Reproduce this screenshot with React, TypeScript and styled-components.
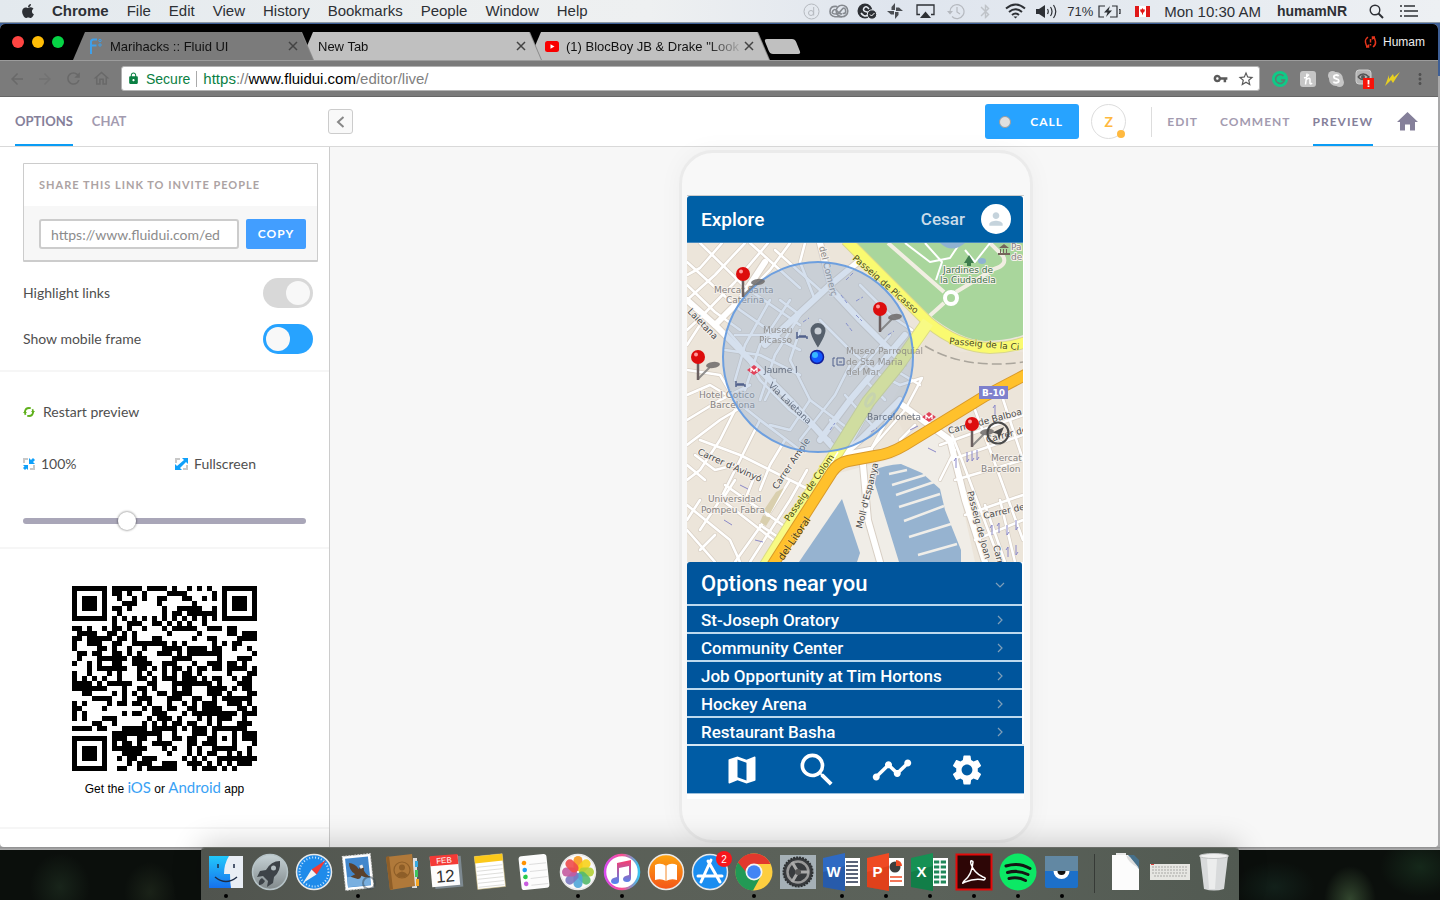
import React from 'react';
import styled, { createGlobalStyle, css } from 'styled-components';
import {
  MdArrowBack, MdArrowForward, MdRefresh, MdOutlineHome, MdLock, MdVpnKey, MdStarBorder,
  MdMoreVert, MdMap, MdSearch, MdTimeline, MdSettings, MdPerson, MdBluetooth,
} from 'react-icons/md';
import { FaApple } from 'react-icons/fa';

const system = '"Liberation Sans", Arial, sans-serif';
const lato = 'Lato, sans-serif';
const roboto = 'Roboto, sans-serif';

const Global = createGlobalStyle`
  * { box-sizing: border-box; }
  body { margin: 0; font-family: ${system}; background: #0c1411; }
  button, input { font: inherit; margin: 0; }
  button { border: 0; padding: 0; background: none; color: inherit; cursor: pointer; }
  a { color: inherit; text-decoration: none; }
  svg { display: block; flex: none; }
`;

/* ---------- desktop ---------- */

const Desktop = styled.div`
  min-height: 100vh;
  display: flex;
  flex-direction: column;
  background: linear-gradient(#3e5f96 0 76px, #a9a9aa 76px 100%);
`;

const MenuBar = styled.header`
  height: 23px;
  flex: none;
  display: flex;
  align-items: center;
  padding: 0 22px 0 20px;
  color: #2d3035;
  font-size: 15px;
  background: linear-gradient(90deg, #e3e9ee, #eceff0 30%, #eef0f1 45%, #dfe5ee 62%, #e5eaf0 80%, #edf0f3);
  border-bottom: 1px solid #8d98a3;
`;

const Menus = styled.nav`
  display: flex;
  gap: 18px;
  margin-left: 16px;
`;

const MenuItem = styled.button<{ $bold?: boolean }>`
  font-weight: ${(p) => (p.$bold ? 700 : 400)};
  line-height: 22px;
`;

const Status = styled.div`
  display: flex;
  align-items: center;
  margin-left: auto;
`;

const StatusIcon = styled.span<{ $w: number; $color?: string; $end?: boolean }>`
  width: ${(p) => p.$w}px;
  display: flex;
  justify-content: ${(p) => (p.$end ? 'flex-end' : 'center')};
  color: ${(p) => p.$color || '#2d3035'};
`;

const StatusText = styled.span<{ $size: number; $bold?: boolean; $pad: string }>`
  font-size: ${(p) => p.$size}px;
  font-weight: ${(p) => (p.$bold ? 700 : 400)};
  padding: ${(p) => p.$pad};
  white-space: nowrap;
`;

/* ---------- browser ---------- */

const Browser = styled.div`
  flex: 1;
  display: flex;
  flex-direction: column;
  margin: 1px 2px 0 0;
  border-radius: 5px 5px 4px 4px;
  overflow: hidden;
  background: #fff;
`;

const TabStrip = styled.div`
  height: 36px;
  display: flex;
  align-items: flex-end;
  padding: 0 13px 0 12px;
  background: #000;
`;

const Lights = styled.div`
  display: flex;
  gap: 8px;
  align-self: center;
  width: 61px;
`;

const Light = styled.button<{ $c: string }>`
  width: 12px;
  height: 12px;
  border-radius: 50%;
  background: ${(p) => p.$c};
`;

const TabWrap = styled.div<{ $z: number }>`
  position: relative;
  z-index: ${(p) => p.$z};
  filter: drop-shadow(1px 0 0 #8a8a8a);
  & + & { margin-left: -12px; }
`;

const TabShape = styled.div<{ $active?: boolean }>`
  width: 240px;
  height: 28px;
  display: flex;
  align-items: center;
  padding: 0 15px 0 16px;
  font-size: 13px;
  color: #111;
  background: ${(p) => (p.$active ? '#7b7b7b' : '#c0c0c0')};
  clip-path: polygon(0 100%, 12px 0, calc(100% - 12px) 0, 100% 100%);
`;

const TabTitle = styled.span<{ $fade?: boolean; $bare?: boolean }>`
  flex: 1;
  overflow: hidden;
  white-space: nowrap;
  padding-left: ${(p) => (p.$bare ? 1 : 7)}px;
  ${(p) => p.$fade && css`
    -webkit-mask-image: linear-gradient(90deg, #000 80%, transparent);
    mask-image: linear-gradient(90deg, #000 80%, transparent);
  `}
`;

const NewTab = styled.button`
  width: 31px;
  height: 15px;
  margin: 0 0 6px -2px;
  background: #c0c0c0;
  border-radius: 3px;
  transform: skewX(22deg);
`;

const Profile = styled.button`
  margin-left: auto;
  align-self: center;
  display: flex;
  align-items: center;
  gap: 6px;
  font-size: 12px;
  color: #eee;
`;

const Toolbar = styled.div`
  height: 37px;
  display: flex;
  align-items: center;
  padding: 0 4px 0 8px;
  background: #7b7b7b;
  border-top: 1px solid #9c9c9c;
  border-bottom: 1px solid #666;
`;

const NavButton = styled.button<{ $dim?: boolean }>`
  width: 28px;
  color: ${(p) => (p.$dim ? '#727272' : '#696969')};
`;

const Omnibox = styled.div`
  flex: 1;
  height: 25px;
  margin: 0 6px 0 1px;
  display: flex;
  align-items: center;
  padding: 0 0 0 5px;
  background: #fff;
  border: 1px solid #b2b2b2;
  border-radius: 3px;
  color: #0b8043;
  font-size: 15px;
`;

const Secure = styled.span`
  font-size: 14px;
  padding: 0 6px;
  margin-right: 6px;
  border-right: 1px solid #aaa;
`;

const Address = styled.div`
  flex: 1;
  color: #808080;
  outline: 0;
  em { font-style: normal; color: #0b8043; }
  strong { font-weight: 400; color: #000; }
`;

const BoxIcon = styled.button`
  width: 26px;
  display: flex;
  justify-content: center;
  color: #5a5a5a;
`;

const Extension = styled.button`
  width: 28px;
  display: flex;
  justify-content: center;
  color: #505050;
`;

/* ---------- Fluid UI shell ---------- */

const AppHeader = styled.div`
  height: 50px;
  display: flex;
  align-items: center;
  padding: 0 20px 0 15px;
  border-bottom: 1px solid #d9d9d9;
  font-family: ${lato};
`;

const HeaderTab = styled.a<{ $active?: boolean }>`
  height: 49px;
  line-height: 49px;
  font-weight: 700;
  color: ${(p) => (p.$active ? '#85809a' : '#a39bb0')};
  border-bottom: 2px solid ${(p) => (p.$active ? '#0a9cf5' : 'transparent')};
`;

const PanelTabs = styled.nav`
  display: flex;
  align-self: stretch;
  width: 313px;
  gap: 19px;
  font-size: 13px;
`;

const ModeTabs = styled.nav`
  display: flex;
  align-self: stretch;
  gap: 22px;
  font-size: 12px;
  letter-spacing: 1px;
`;

const Collapse = styled.button`
  width: 25px;
  height: 25px;
  display: grid;
  place-items: center;
  border: 1px solid #ccc;
  border-radius: 3px;
  background: #f9f9f9;
`;

const Actions = styled.div`
  display: flex;
  align-items: center;
  margin-left: auto;
`;

const Call = styled.button`
  width: 94px;
  height: 35px;
  display: flex;
  align-items: center;
  gap: 19px;
  padding-left: 14px;
  border-radius: 3px;
  background: #27a3ff;
  color: #fff;
  font-size: 12px;
  font-weight: 700;
  letter-spacing: 1px;
`;

const Record = styled.span`
  width: 12px;
  height: 12px;
  border-radius: 50%;
  background: #e0e0e0;
  border: 1px solid #9c9c9c;
`;

const Avatar = styled.div`
  position: relative;
  width: 35px;
  height: 35px;
  margin: 0 25px 0 12px;
  border: 1px solid #ddd;
  border-radius: 50%;
  text-align: center;
  line-height: 34px;
  font-size: 14px;
  font-weight: 700;
  color: #ffb93f;
  &::after {
    content: '';
    position: absolute;
    right: 0;
    bottom: 0;
    width: 8px;
    height: 8px;
    border-radius: 50%;
    background: #ffb93f;
  }
`;

const Rule = styled.span`
  width: 1px;
  height: 30px;
  margin-right: 15px;
  background: #ddd;
`;

const HomeLink = styled.a`
  margin-left: 24px;
`;

const Workspace = styled.div`
  flex: 1;
  display: flex;
`;

const Sidebar = styled.aside`
  width: 330px;
  flex: none;
  border-right: 1px solid #ccc;
  font-family: ${lato};
  font-size: 14px;
  line-height: 20px;
  color: #4f4f4f;
`;

const Section = styled.section<{ $pad: string }>`
  padding: ${(p) => p.$pad};
  border-bottom: 2px solid #f6f6f6;
`;

const ShareCard = styled.div`
  margin-right: -12px;
  border: 1px solid #ccc;
  border-bottom-width: 2px;
  border-radius: 1px;
`;

const ShareTitle = styled.label`
  display: block;
  height: 42px;
  line-height: 42px;
  padding-left: 15px;
  font-size: 11px;
  font-weight: 700;
  letter-spacing: 1px;
  color: #aca3a3;
`;

const ShareRow = styled.div`
  display: flex;
  gap: 7px;
  padding: 13px 11px 11px 15px;
  background: #f7f7f7;
`;

const LinkInput = styled.input`
  flex: 1;
  min-width: 0;
  height: 30px;
  padding: 1px 2px 0 10px;
  border: 2px solid #ccc;
  border-radius: 3px;
  background: #fff;
  color: #8c8c8c;
  font-size: 14px;
  outline: 0;
`;

const Copy = styled.button`
  width: 60px;
  height: 30px;
  border-radius: 2px;
  background: #429eff;
  color: #fff;
  font-size: 12px;
  font-weight: 700;
  letter-spacing: 1px;
`;

const ToggleRow = styled.label`
  height: 30px;
  margin: 16px -7px 0 0;
  display: flex;
  align-items: center;
  justify-content: space-between;
`;

const Toggle = styled.input`
  appearance: none;
  width: 50px;
  height: 30px;
  padding: 3px;
  border-radius: 15px;
  background: #d8d8d8;
  display: flex;
  justify-content: flex-end;
  &::before {
    content: '';
    width: 24px;
    height: 24px;
    border-radius: 50%;
    background: #f8f8f8;
  }
  &:checked { background: #27a3ff; justify-content: flex-start; }
`;

const Tool = styled.button<{ $gap: number }>`
  display: flex;
  align-items: center;
  gap: ${(p) => p.$gap}px;
`;

const ZoomRow = styled.div`
  display: grid;
  grid-template-columns: 152px 1fr;
  margin: 32px 0 37px;
`;

const Slider = styled.input`
  appearance: none;
  display: block;
  width: 100%;
  height: 20px;
  background: none;
  &::-webkit-slider-runnable-track {
    height: 6px;
    border-radius: 3px;
    background: #a9a6b8;
  }
  &::-webkit-slider-thumb {
    appearance: none;
    width: 18px;
    height: 18px;
    margin-top: -6px;
    border-radius: 50%;
    background: #fff;
    box-shadow: 0 0 2px 1px rgba(0, 0, 0, 0.3);
  }
`;

const QrBlock = styled.div`
  display: flex;
  flex-direction: column;
  align-items: center;
  gap: 6px;
`;

const Caption = styled.p`
  margin: 0;
  font-family: ${system};
  font-size: 12px;
  line-height: 20px;
  color: #000;
  a { font-family: ${lato}; font-size: 15px; color: #3aa2f5; }
`;

const Stage = styled.main`
  flex: 1;
  display: flex;
  justify-content: center;
  align-items: flex-start;
  padding: 3px 56px 4px 0;
  background: #f7f7f7;
`;

/* ---------- phone ---------- */

const Phone = styled.div`
  width: 354px;
  padding: 42px 6px 41px 5px;
  border: 3px solid #ebebeb;
  border-radius: 34px;
  background: #f8f8f8;
  box-shadow: 0 0 24px rgba(0, 0, 0, 0.04);
`;

const Screen = styled.div`
  width: 337px;
  padding-bottom: 5px;
  background: #fff;
  border-top: 1px solid #ccc;
  font-family: ${roboto};
  font-weight: 500;
  color: #fff;
`;

const TitleBar = styled.div`
  height: 47px;
  margin-right: 1px;
  display: flex;
  align-items: center;
  padding: 0 12px 0 14px;
  border-radius: 3px 3px 0 0;
  border-bottom: 1px solid #4789bd;
  background: #0060a6;
`;

const Title = styled.h1`
  flex: 1;
  margin: 0;
  font-size: 19px;
  font-weight: 500;
`;

const UserName = styled.span`
  font-size: 17px;
  color: #c9dbe9;
  margin-right: 16px;
`;

const UserIcon = styled.span`
  width: 30px;
  height: 30px;
  display: grid;
  place-items: center;
  border-radius: 50%;
  background: #fff;
  color: #c5d3dc;
`;

const ListHead = styled.button`
  width: 335px;
  height: 42px;
  display: flex;
  align-items: center;
  justify-content: space-between;
  padding: 0 17px 0 14px;
  border-radius: 3px 3px 0 0;
  background: #00559c;
  font-size: 22px;
  font-weight: 500;
`;

const List = styled.ul`
  list-style: none;
  margin: 0;
  padding: 0;
`;

const Option = styled.button`
  width: 335px;
  height: 28px;
  display: flex;
  align-items: center;
  justify-content: space-between;
  padding: 2px 17px 0 14px;
  border-top: 2px solid #bdd9ee;
  background: #00559c;
  font-size: 17px;
  font-weight: 500;
`;

const BottomNav = styled.nav`
  height: 50px;
  display: grid;
  grid-template-columns: repeat(4, 75px);
  place-items: center;
  padding: 0 17px;
  border-top: 2px solid #d6e7f4;
  border-bottom: 1px solid #9dc0dc;
  background: #005ca5;
`;

/* ---------- dock ---------- */

const DockArea = styled.footer`
  height: 53px;
  flex: none;
  display: flex;
  justify-content: center;
  align-items: flex-end;
  background:
    linear-gradient(#8e8e8f, #b0b0b0) 0 0 / 100% 3px no-repeat,
    radial-gradient(ellipse 26px 34px at 1350px 100%, #33472f, transparent),
    radial-gradient(ellipse 40px 30px at 1420px 20px, #15281a, transparent),
    radial-gradient(ellipse 40px 26px at 1275px 40px, #12201a, transparent),
    radial-gradient(ellipse 30px 34px at 60px 40px, #18241a, transparent),
    radial-gradient(ellipse 26px 30px at 150px 45px, #1a2218, transparent),
    #0b0f0c;
`;

const Dock = styled.nav`
  position: relative;
  height: 52px;
  display: flex;
  padding: 0 3px;
  border-radius: 4px 4px 0 0;
  background: linear-gradient(90deg, #50544e, #5a5f57 30%, #5b625a 70%, #525a52);
  box-shadow: 0 -1px 0 #6a6d68, 0 -4px 30px rgba(0, 0, 0, 0.2);
`;

const DockItem = styled.button<{ $running?: boolean }>`
  width: 44px;
  display: flex;
  flex-direction: column;
  align-items: center;
  gap: 2px;
  padding-top: 4px;
  &::after {
    content: '';
    width: 4px;
    height: 4px;
    border-radius: 50%;
    background: ${(p) => (p.$running ? '#000' : 'transparent')};
  }
`;

const DockRule = styled.span`
  width: 1px;
  margin: 6px 9px 7px 10px;
  background: #363a36;
`;

/* ---------- QR code ---------- */

const QR_SIZE = 37;

function finder(x: number, y: number): boolean | null {
  const corners = [[0, 0], [QR_SIZE - 7, 0], [0, QR_SIZE - 7]];
  for (const [cx, cy] of corners) {
    const dx = x - cx;
    const dy = y - cy;
    if (dx >= -1 && dx <= 7 && dy >= -1 && dy <= 7) {
      const ring = Math.max(Math.abs(dx - 3), Math.abs(dy - 3));
      return ring !== 4 && ring !== 2;
    }
  }
  const ring = Math.max(Math.abs(x - 30), Math.abs(y - 30));
  if (ring <= 2) return ring !== 1;
  if (x === 6) return y % 2 === 0;
  if (y === 6) return x % 2 === 0;
  return null;
}

function qrPath() {
  let seed = 20177;
  let d = '';
  for (let y = 0; y < QR_SIZE; y++) {
    for (let x = 0; x < QR_SIZE; x++) {
      seed = (seed * 48271) % 2147483647;
      const fixed = finder(x, y);
      if (fixed === null ? seed / 2147483647 > 0.5 : fixed) d += `M${x} ${y}h1v1h-1z`;
    }
  }
  return d;
}

const QrCode = () => (
  <svg width="185" height="185" viewBox="0 0 37 37" shapeRendering="crispEdges" role="img" aria-label="QR code">
    <path d={qrPath()} fill="#000" />
  </svg>
);

/* ---------- map ---------- */

const MapSvg = styled.svg`
  width: 336px;
  height: 319px;
  text {
    font-family: "DejaVu Sans", sans-serif;
    font-size: 9px;
    fill: #85827f;
    stroke: #f5f0ea;
    stroke-width: 2px;
    paint-order: stroke;
  }
  text.street { fill: #4b4b4b; }
  text.main { fill: #4a4a12; stroke: #fafa8c; stroke-width: 1px; }
  text.orange { fill: #4a3a12; font-size: 10px; stroke: #ffd25e; stroke-width: 1px; }
  text.park { fill: #3c7048; }
  text.sign { fill: #fff; stroke: none; font-weight: 700; }
  .shaded { opacity: 0.8; }
  .shaded text { stroke: none; }
  .shaded text.dark { fill: #4b5568; }
`;

const minorStreets = [
  'M687 262L740 310L790 345', 'M700 243L745 287L800 325', 'M722 243L700 268L687 275', 'M745 243L715 275L687 300',
  'M768 243L735 282L700 318L687 330', 'M790 243L770 270L740 300', 'M687 285L715 312L740 330', 'M750 243L800 288',
  'M775 250L820 290', 'M805 243L800 262L815 300', 'M700 325L687 345', 'M727 330L740 345L760 380L790 410L830 440',
  'M770 300L745 345L735 380', 'M790 300L760 345L745 390', 'M800 315L775 355L760 400', 'M725 350L760 355L800 375',
  'M735 335L770 335L800 350', 'M800 330L790 360L810 400L850 430', 'M820 320L850 350L880 375L900 385',
  'M840 300L870 330L905 365', 'M860 285L890 315L912 330', 'M850 365L835 395L800 440', 'M870 350L850 375',
  'M890 335L860 370', 'M865 380L885 400', 'M845 395L872 425', 'M830 420L850 440', 'M687 395L710 385L735 400L760 420L800 450',
  'M687 420L720 400L750 385', 'M687 445L720 420L745 405', 'M687 370L720 375L735 400', 'M700 440L740 455L790 480L810 490',
  'M735 410L720 440L700 470L687 480', 'M760 420L745 450L720 500L700 530', 'M785 440L770 465L760 490',
  'M725 485L790 530', 'M735 480L722 500L780 545', 'M755 475L745 500', 'M687 505L730 540L740 562', 'M687 530L715 562',
  'M700 500L687 520', 'M790 480L765 520L735 562', 'M807 470L790 500L750 562', 'M700 550L715 535', 'M760 525L790 545',
  'M695 455L715 470L735 465', 'M687 465L705 480', 'M810 400L790 430L770 425', 'M775 380L765 400', 'M780 300L800 315',
  'M900 385L922 378L905 410L870 450', 'M895 370L920 385', 'M875 400L850 445', 'M890 415L868 455', 'M900 405L950 440',
  'M915 425L900 440', 'M950 430L960 455L1000 562', 'M975 410L990 450L1023 540', 'M940 445L1023 415',
  'M950 460L1023 435', 'M955 480L1023 460', 'M965 515L1023 495', 'M975 540L1023 520', 'M1000 390L1023 460',
  'M1000 500L1015 562', 'M985 505L1005 562', 'M955 450L940 480',
];

const avenues = ['M687 300L715 325L740 300L765 262', 'M715 325L790 400L840 455', 'M765 345L830 285L858 262',
  'M820 243L832 290L860 320L900 360', 'M820 440L850 400L905 335', 'M843 455L860 440L900 400', 'M902 405L950 440L965 500L985 562',
  'M820 475L845 455L870 450', 'M863 465L868 520L880 562'];

const Pin = ({ x, y }: { x: number; y: number }) => (
  <g transform={`translate(${x} ${y})`}>
    <ellipse cx="15" cy="8" rx="7" ry="3" fill="#6d6a68" opacity=".85" transform="rotate(-8 15 8)" />
    <path d="M0 22L12 10" stroke="#777" strokeWidth="2" opacity=".8" />
    <path d="M0 5V23" stroke="#6b6060" strokeWidth="2.5" />
    <circle r="7" fill="#dd0d0d" />
    <circle cx="-2" cy="-2.5" r="2" fill="#ff9a9a" />
  </g>
);

const CityMap = () => (
  <MapSvg viewBox="687 243 336 319" role="img" aria-label="Map of Barcelona">
    <rect x="687" y="243" width="336" height="319" fill="#ece5da" />
    <path d="M780 562L832 475L895 458L945 425L975 562Z" fill="#f0ede7" />
    <path d="M930 330L960 352L1023 352V372L905 435L890 405Z" fill="#eae2d6" />
    <g fill="none" strokeLinecap="round" strokeLinejoin="round">
      {minorStreets.map((d) => <path key={d} d={d} stroke="#d8cfc4" strokeWidth="4" />)}
      {avenues.map((d) => <path key={d} d={d} stroke="#d8cfc4" strokeWidth="8" />)}
      {minorStreets.map((d) => <path key={d} d={d} stroke="#fff" strokeWidth="2.6" />)}
      {avenues.map((d) => <path key={d} d={d} stroke="#fff" strokeWidth="6" />)}
    </g>
    <path d="M855 243L928 314Q960 340 985 341Q1006 341 1023 335V243Z" fill="#a9d69c" />
    <g fill="none" stroke="#fff" strokeWidth="4" strokeLinejoin="round">
      <path d="M888 243L944 292M956 292L994 269Q1008 265 1003 256L990 243M944 303L925 320" stroke="#f1eee2" />
      <path d="M905 243L930 262L950 258L960 243M925 243L942 262L936 280M965 250L975 262L990 243" strokeWidth="2" />
      <circle cx="951" cy="298" r="6" />
    </g>
    <path d="M940 243Q952 254 965 243Z" fill="#8fb3d1" />
    <ellipse cx="982" cy="261" rx="4" ry="3" fill="#8fb3d1" />
    <path d="M969 255l5 8h-3v3h-4v-3h-3z" fill="#3f7d4e" />
    <path d="M999 248l5-4 5 4zM1000 249h1v4h-1zm3 0h1v4h-1zm3 0h1v4h-1zM998 253h12v2h-12z" fill="#75655b" />
    <g fill="none" strokeLinejoin="round">
      <path d="M846 240L928 322Q958 347 990 348Q1008 348 1026 342" stroke="#d8d68c" strokeWidth="12" />
      <path d="M928 322L898 365L868 402L835 455L765 567" stroke="#dcdc84" strokeWidth="14" />
      <path d="M846 240L928 322Q958 347 990 348Q1008 348 1026 342" stroke="#fafa70" strokeWidth="10" />
      <path d="M928 322L898 365L868 402L835 455L765 567" stroke="#f8fa84" strokeWidth="12" />
      <path d="M838 452L770 562" stroke="#fff" strokeWidth="1.5" />
      <ellipse cx="870" cy="400" rx="3" ry="7" stroke="#e7ea9a" strokeWidth="3" transform="rotate(32 870 400)" />
      <path d="M925 346Q965 370 1023 362" stroke="#aaa59c" strokeWidth="1.5" strokeDasharray="10 4" />
      <path d="M1027 374L985 396L905 445Q890 454 875 456L848 461Q838 463 832 472L770 569" stroke="#d8992a" strokeWidth="12" />
      <path d="M1027 374L985 396L905 445Q890 454 875 456L848 461Q838 463 832 472L770 569" stroke="#ffc12c" strokeWidth="10" />
    </g>
    <path d="M842 499L860 553L857 562H799Z" fill="#96b3d0" />
    <path d="M871 471Q885 465 901 464L922 473L940 489L945 510L961 550L961 562H899Z" fill="#96b3d0" />
    <path d="M889 474L907 470M892 485L925 475M896 495L934 482M899 507L940 494M904 521L944 506M909 537L951 524M918 555L957 544" stroke="#f0eee9" strokeWidth="2.5" />
    <path d="M776 492l8-4-14 26-6-4zM763 515l8 3-5 8-6-4z" fill="#d9cfae" />
    <text x="714" y="293">Mercat Santa</text><text x="726" y="303">Caterina</text>
    <text x="687" y="312" className="street" transform="rotate(46 687 312)">Laietana</text>
    <text x="819" y="247" transform="rotate(76 819 247)">del Comerç</text>
    <text x="699" y="398">Hotel Gotico</text><text x="710" y="408">Barcelona</text>
    <text x="708" y="502">Universidad</text><text x="701" y="513">Pompeu Fabra</text>
    <text x="697" y="454" className="street" transform="rotate(24 697 454)">Carrer d'Avinyó</text>
    <text x="777" y="490" className="street" transform="rotate(-56 777 490)">Carrer Ample</text>
    <text x="789" y="522" className="main" transform="rotate(-55 789 522)">Passeig de Colom</text>
    <text x="783" y="561" className="orange" transform="rotate(-56 783 561)">del Litoral</text>
    <text x="862" y="529" className="street" transform="rotate(-76 862 529)">Moll d'Espanya</text>
    <text x="852" y="259" className="main" transform="rotate(41 852 259)">Passeig de Picasso</text>
    <text x="949" y="344" className="main" transform="rotate(5 949 344)">Passeig de la Ci</text>
    <text x="943" y="273" className="park">Jardines de</text><text x="940" y="283" className="park">la Ciudadela</text>
    <text x="1011" y="250">Pa</text><text x="1011" y="260">de</text>
    <text x="949" y="434" className="street" transform="rotate(-15 949 434)">Carrer de Balboa</text>
    <text x="987" y="443" className="street" transform="rotate(-15 987 443)">Carrer de</text>
    <text x="991" y="461">Mercat</text><text x="981" y="472">Barcelon</text>
    <text x="984" y="519" className="street" transform="rotate(-13 984 519)">Carrer de</text>
    <text x="967" y="492" className="street" transform="rotate(75 967 492)">Passeig de Joan</text>
    <text x="993" y="546" className="street" transform="rotate(76 993 546)">Carr</text>
    <g stroke="#8a88c8" fill="none" strokeWidth="1">
      <path d="M956 468v-10l-2 3M967 452v10l2-3M972 451v10l2-3M977 450v10l2-3M992 535v-10l-2 3M999 533v-10l-2 3M1007 525v10l2-3M1016 520v10l2-3M1008 557v-10l-2 3M1016 545v10l2-3M995 415v-10l-2 3M724 520l8 5M755 540l8 2M740 485l8 4M928 448l8 4M910 430l8-4" />
    </g>
    <rect x="979" y="386" width="29" height="13" fill="#7e80cc" />
    <text x="982" y="396" className="sign">B-10</text>
    <circle cx="818" cy="357" r="95" fill="#8cacd2" fillOpacity=".37" stroke="#6d9fdf" strokeWidth="2" />
    <g className="shaded">
      <text x="763" y="333">Museu</text><text x="759" y="343">Picasso</text>
      <text x="764" y="373" className="dark">Jaume I</text>
      <text x="846" y="354">Museo Parroquial</text><text x="846" y="365">de Sta Maria</text><text x="846" y="375">del Mar</text>
      <text x="768" y="386" className="dark" transform="rotate(44 768 386)">Via Laietana</text>
      <text x="867" y="420" className="dark">Barceloneta</text>
    </g>
    {[[754, 370], [929, 417]].map(([x, y]) => (
      <g key={x} transform={`translate(${x} ${y})`}>
        <path d="M0-5L7 0L0 5L-7 0Z" fill="#e0435a" />
        <path d="M-3 2V-2L0 1L3-2V2" stroke="#fff" fill="none" strokeWidth="1.3" />
      </g>
    ))}
    <path d="M797 332v7m0-2h10v2m-8-3h7M736 381v6m0-2h9v2m-8-3h7" stroke="#51618c" fill="none" strokeWidth="1.5" />
    <path d="M835 358h-2v8h2M837 358h7v7h-7zM839 362h3" stroke="#51618c" fill="none" />
    <g stroke="#8691cc" strokeDasharray="4 2">
      <path d="M846 280l8-8M841 295l6 8M856 301l7-4M856 315l6 6M803 322l6-4M846 323l6 8M888 335l6-4M830 430l5-7M871 432l6-4" />
    </g>
    <path d="M818 323a7.5 7.5 0 0 0-7.5 7.5c0 5.5 7.5 17 7.5 17s7.5-11.5 7.5-17a7.5 7.5 0 0 0-7.5-7.5zm0 4.5a3.5 3.5 0 1 1 0 7 3.5 3.5 0 0 1 0-7z" fill="#56606c" />
    <circle cx="817" cy="357" r="6.5" fill="#1457ff" stroke="#111d9a" strokeWidth="1.5" />
    <circle cx="815" cy="355" r="3" fill="#38b6ff" />
    <Pin x={743} y={274} /><Pin x={880} y={309} /><Pin x={698} y={357} /><Pin x={972} y={424} />
    <circle cx="998" cy="433" r="10.5" fill="none" stroke="#4a4a4a" strokeWidth="2" />
    <path d="M1004 427l-5 12-1.5-5-5-1.5z" fill="#4a4a4a" />
  </MapSvg>
);

/* ---------- dock icons ---------- */

const Disc = ({ fill, edge = '#e8e8e8' }: { fill: string; edge?: string }) => (
  <circle cx="20" cy="20" r="17.5" fill={fill} stroke={edge} strokeWidth="1.5" />
);

const Office = ({ letter, color, dark, children }: { letter: string; color: string; dark: string; children: React.ReactNode }) => (
  <>
    <path d="M22 6h16v28H22z" fill="#fff" />
    {children}
    <path d="M1 6L23 1V39L1 35Z" fill={color} />
    <path d="M1 20L23 14V39L1 35Z" fill={dark} opacity=".35" />
    <text x="11.5" y="25" textAnchor="middle" fontFamily={system} fontWeight="700" fontSize="15" fill="#fff">{letter}</text>
  </>
);

const apps: { name: string; running?: boolean; art: React.ReactNode }[] = [
  { name: 'Finder', running: true, art: <>
    <defs><linearGradient id="fd" x2="0" y2="1"><stop stopColor="#22c8fb" /><stop offset="1" stopColor="#1671ee" /></linearGradient></defs>
    <path d="M3 4h34v32H3z" fill="#e9eef5" /><path d="M3 4h20q-5 8-5 18h6q0 8 1 14H3z" fill="url(#fd)" />
    <path d="M12 12v4M28 12v4" stroke="#1d2b45" strokeWidth="1.5" /><path d="M9 25q11 9 22 0" stroke="#1d2b45" strokeWidth="1.5" fill="none" /></> },
  { name: 'Launchpad', art: <>
    <defs><linearGradient id="lp" x2="0" y2="1"><stop stopColor="#c6d2d6" /><stop offset="1" stopColor="#81898b" /></linearGradient></defs>
    <Disc fill="url(#lp)" edge="#b6c3c7" /><path d="M30 9q-9 0-14 9l-6 1-3 6 6-1 5 5-1 6 6-4 1-6q7-6 6-16z" fill="#3d4348" /><circle cx="23.5" cy="16" r="2.5" fill="#b3bdc1" /><path d="M12 26q-4 2-3 7 4 0 6-4z" fill="#3d4348" /></> },
  { name: 'Safari', art: <>
    <Disc fill="#1f8bea" /><circle cx="20" cy="20" r="14.5" fill="none" stroke="#c7e6ff" strokeWidth="2" strokeDasharray="1 2" /><path d="M32 8L22.5 22.5 17.5 17.5z" fill="#f33a35" /><path d="M9 31l8.5-13.5 5 5z" fill="#f2f2f2" /></> },
  { name: 'Mail', running: true, art: <>
    <g transform="rotate(-6 20 20)"><path d="M6 3h28v34H6z" fill="#fff" stroke="#ddd" strokeDasharray="2 1" /><path d="M8.5 5.5h23v29h-23z" fill="#4287cc" /><path d="M8.5 24h23v10h-23z" fill="#78afe0" /><path d="M12 10q6 1 9 7l3-3q3 1 2 5 2 5 6 7-5 1-9-2-1 3-4 3l-7-3 5-2q-6-5-5-12z" fill="#5a412c" /><path d="M22 14l3-1 1 3-3 1z" fill="#eee" /></g><circle cx="31" cy="31" r="6" fill="none" stroke="#3a4850" strokeWidth="2" opacity=".5" /></> },
  { name: 'Contacts', art: <>
    <path d="M31 6h4v30h-5z" fill="#ddd" /><path d="M33 9h3v6h-3z" fill="#35a8e0" /><path d="M33 18h3v7h-3z" fill="#3fc45e" /><path d="M34 27h3v7h-3z" fill="#f5a623" />
    <path d="M4 5L30 2L33 34L8 38Z" fill="#b0793a" /><path d="M4 5l3-1 4 33-3 1z" fill="#8e5e28" /><circle cx="20" cy="18" r="8" fill="none" stroke="#8e5e28" strokeWidth="1.2" /><circle cx="20" cy="15.5" r="3" fill="#8e5e28" /><path d="M14 23q6-7 12 0-6 5-12 0z" fill="#8e5e28" /></> },
  { name: 'Calendar', art: <>
    <g transform="rotate(-5 20 20)"><path d="M8 5h28v31H8z" fill="#7d8990" /><path d="M5 4h28v30H5z" fill="#fdfdfd" /><path d="M5 3h28v10H5z" fill="#f43a36" />
      <text x="19" y="11" textAnchor="middle" fontFamily={system} fontSize="8" fill="#fff">FEB</text><text x="19" y="30" textAnchor="middle" fontFamily={system} fontSize="17" fill="#333">12</text></g></> },
  { name: 'Notes', art: <>
    <g transform="rotate(-6 20 20)"><path d="M6 3h28v33H6z" fill="#fff" stroke="#c9b673" strokeWidth=".5" /><path d="M6 3h28v7H6z" fill="#fbc91b" /><path d="M7 14h26M7 18h26M7 22h26M7 26h26M7 30h26M7 34h26" stroke="#d8d8d4" strokeWidth=".8" /></g></> },
  { name: 'Reminders', art: <>
    <g transform="rotate(-6 20 20)"><rect x="6" y="3" width="28" height="34" rx="3" fill="#fcfcfc" /><circle cx="11" cy="10" r="2.3" fill="#ff9100" /><circle cx="11" cy="17" r="2.3" fill="#1f9cf5" /><circle cx="11" cy="24" r="2.3" fill="#25c94d" /><circle cx="11" cy="31" r="2.3" fill="#c95be0" /><path d="M16 12h17M16 19h17M16 26h17M16 33h17" stroke="#ddd" /></g></> },
  { name: 'Photos', running: true, art: <>
    <Disc fill="#fafafa" />{['#f8981d', '#f7d21b', '#b3cf35', '#54b96b', '#4fa6d8', '#7a78c0', '#c45a9f', '#ee4b4b'].map((c, i) => (
      <rect key={c} x="15.5" y="4" width="9" height="15" rx="4.5" fill={c} opacity=".9" transform={`rotate(${i * 45} 20 20)`} />))}</> },
  { name: 'iTunes', running: true, art: <>
    <defs><linearGradient id="it"><stop stopColor="#d74bf0" /><stop offset=".5" stopColor="#fb4e8c" /><stop offset="1" stopColor="#38c4f2" /></linearGradient><linearGradient id="nt" x2="0" y2="1"><stop stopColor="#fb3c6d" /><stop offset="1" stopColor="#4c87f5" /></linearGradient></defs>
    <circle cx="20" cy="20" r="17" fill="#fff" stroke="url(#it)" strokeWidth="2.5" /><path d="M15 11l14-3v18q0 4-4 4t-4-3 6-4V14l-10 2v13q0 3-4 3t-4-3 6-4z" fill="url(#nt)" /></> },
  { name: 'iBooks', art: <>
    <defs><linearGradient id="ib" x2="0" y2="1"><stop stopColor="#fda40f" /><stop offset="1" stopColor="#f4551a" /></linearGradient></defs>
    <Disc fill="url(#ib)" /><path d="M20 14q-5-4-11-1v15q6-2 11 1 5-3 11-1V13q-6-3-11 1z" fill="#fff" /><path d="M20 14v15" stroke="#f58a2b" /></> },
  { name: 'App Store', art: <>
    <Disc fill="#1a8df0" /><path d="M21 8L11 30M18 9l12 21M8 24h24" stroke="#fff" strokeWidth="3" strokeLinecap="round" /><circle cx="34" cy="7" r="8" fill="#f8171c" /><text x="34" y="11" textAnchor="middle" fontFamily={system} fontSize="10" fill="#fff">2</text></> },
  { name: 'Google Chrome', running: true, art: <>
    <circle cx="20" cy="20" r="18.5" fill="#fdce40" /><path d="M4 10.5A18.5 18.5 0 0 0 19 38.5L27 24 20 20z" fill="#229a55" /><path d="M4 10.5A18.5 18.5 0 0 1 36.5 12H20q-7 1-8 8z" fill="#e2382d" /><circle cx="20" cy="20" r="8.5" fill="#f5f5f5" /><circle cx="20" cy="20" r="6.8" fill="#4285f4" /></> },
  { name: 'System Preferences', art: <>
    <path d="M2 3h36v34H2z" fill="#a5b0b6" /><circle cx="20" cy="20" r="14.5" fill="#383b3e" stroke="#2d3032" strokeWidth="2" strokeDasharray="2 1" /><circle cx="20" cy="20" r="10.5" fill="none" stroke="#999" strokeWidth="2.5" /><path d="M20 20L31 20M20 20L14 10M20 20L14 30" stroke="#aaa" strokeWidth="3" /><circle cx="20" cy="20" r="3" fill="#555" /></> },
  { name: 'Word', running: true, art: <Office letter="W" color="#2f6ac3" dark="#1b3f7d"><path d="M24 10h12M24 14h12M24 18h12M24 22h12M24 26h12M24 30h12" stroke="#25324d" strokeWidth="1.5" /></Office> },
  { name: 'PowerPoint', running: true, art: <Office letter="P" color="#ef4a23" dark="#c5320f"><circle cx="29" cy="15" r="5.5" fill="#3d3d3d" /><path d="M30 14V8a6 6 0 0 1 6 6z" fill="#ef4a23" /><path d="M24 25h12M24 29h12" stroke="#ef4a23" strokeWidth="1.5" /></Office> },
  { name: 'Excel', running: true, art: <Office letter="X" color="#169154" dark="#0a5c33"><path d="M24 10h12M24 15h12M24 20h12M24 25h12M24 30h12" stroke="#21885a" strokeWidth="3" /><path d="M30 7v26" stroke="#fff" strokeWidth="1.5" /></Office> },
  { name: 'Acrobat', running: true, art: <>
    <path d="M2.5 2.5h35v35h-35z" fill="#2d0606" stroke="#e30a0a" strokeWidth="2" /><path d="M18 9q-2-1-1 3 3 9 12 13 4 1 1 3-9-2-19 2-4 3-1-1 8-6 9-19 0-1-1-1z" fill="none" stroke="#fff" strokeWidth="1.5" /></> },
  { name: 'Spotify', running: true, art: <>
    <circle cx="20" cy="20" r="18.5" fill="#0ce865" /><path d="M8 14q13-4 24 2.5M9.5 20.5q11-3 20.5 2M11 26.5q9-2 16.5 2" fill="none" stroke="#141414" strokeWidth="3" strokeLinecap="round" /></> },
  { name: 'Paw', running: true, art: <>
    <rect x="3" y="4" width="33" height="32" rx="2" fill="#1d70c9" /><path d="M3 4h33v15H3z" fill="#6288a3" /><path d="M11.5 19a8 8 0 0 0 16 0z" fill="#fff" /><path d="M15.5 19a4 4 0 0 0 8 0z" fill="#111" /></> },
];

const stacks: { name: string; art: React.ReactNode }[] = [
  { name: 'Documents', art: <><path d="M10 1h10v8H10z" fill="#e8e8e8" /><path d="M6 3h18l9 11v24H6z" fill="#fcfcfc" /><path d="M22 3h6l5 5v9z" fill="#46708b" /><path d="M20 3q2 8 13 13L24 5z" fill="#ddd" /></> },
  { name: 'Screenshots', art: <><path d="M0 12h40v16H0z" fill="#e6e6e2" /><path d="M2 15h36M2 18h36M2 21h36M4 24h32" stroke="#a8a8a5" strokeDasharray="2 1" /><path d="M1 12h3v1H1z" fill="#e0403a" /></> },
  { name: 'Trash', art: <><path d="M6 4h28l-4 33q-10 3-20 0z" fill="#d8dadb" /><path d="M13 7h10l-2 30h-6z" fill="#eceded" /><ellipse cx="20" cy="4" rx="14.5" ry="2.5" fill="#f1f1f1" stroke="#c2c4c4" /></> },
];

/* ---------- small glyphs ---------- */

const CloseX = () => (
  <svg width="10" height="10" viewBox="0 0 10 10"><path d="M1 1l8 8M9 1l-8 8" stroke="#444" strokeWidth="1.5" /></svg>
);
const FluidIcon = () => (
  <svg width="14" height="16" viewBox="0 0 14 16" fill="none" stroke="#3fa0ea"><path d="M2 16V4q0-2.5 2.5-2.5H8M2 7.5h5.5" strokeWidth="2" /><circle cx="11" cy="2.5" r="1.2" /><circle cx="11" cy="7" r="1.2" /></svg>
);
const Chevron = ({ down }: { down?: boolean }) => (
  <svg width="10" height="10" viewBox="0 0 10 10"><path d={down ? 'M1 5l4 4 4-4' : 'M3 1l4 4-4 4'} stroke="#7f9fb9" strokeWidth="1.2" fill="none" /></svg>
);

const StatusIcons = () => (
  <>
    <StatusIcon $w={28} $color="#b5b9bf"><svg width="17" height="17" viewBox="0 0 17 17" fill="none" stroke="currentColor"><circle cx="8.5" cy="8.5" r="7.5" /><circle cx="8" cy="10" r="2.5" /><path d="M10.7 4v8.5" /></svg></StatusIcon>
    <StatusIcon $w={28} $color="#85898f"><svg width="20" height="14" viewBox="0 0 20 14" fill="none" stroke="currentColor" strokeWidth="1.6"><circle cx="13" cy="7" r="5.8" /><path d="M8 2.5Q1 1.5 1 7.5q0 4.5 5 5.3h7" /><path d="M13 10q-3 0-5-3T3.8 7t3.7 3q2 0 5-4t4 0-3 3.5" /></svg></StatusIcon>
    <StatusIcon $w={28}><svg width="20" height="17" viewBox="0 0 20 17"><circle cx="8" cy="8" r="7.5" fill="currentColor" /><path d="M12 6Q9 2 7 5t3 4-1 4Q6 13 4 10" stroke="#e5eaf0" fill="none" strokeWidth="1.5" /><circle cx="15" cy="11.5" r="4.7" fill="currentColor" stroke="#e5eaf0" /><path d="M13 11.5l1.5 1.5 3-3" stroke="#fff" fill="none" /></svg></StatusIcon>
    <StatusIcon $w={28} $color="#4b4e53"><svg width="16" height="16" viewBox="0 0 16 16" fill="currentColor"><path d="M8 0v7H4.5V4zM16 8H9V4.5h3zM8 16V9h3.5v3zM0 8h7v3.5H4z" /></svg></StatusIcon>
    <StatusIcon $w={32}><svg width="19" height="15" viewBox="0 0 19 15"><path d="M4 10.5H1V1h17v9.5h-3" fill="none" stroke="currentColor" strokeWidth="1.3" /><path d="M9.5 7.5L15 14H4z" fill="currentColor" /></svg></StatusIcon>
    <StatusIcon $w={30} $color="#b5b9bf"><svg width="18" height="17" viewBox="0 0 18 17" fill="none" stroke="currentColor" strokeWidth="1.2"><path d="M3 8.5A7 7 0 1 1 5 13.5M10 4v5l3 2" /><path d="M0 8h6l-3 3.5z" fill="currentColor" stroke="none" /></svg></StatusIcon>
    <StatusIcon $w={28} $color="#bfc3c8"><MdBluetooth size={17} /></StatusIcon>
    <StatusIcon $w={32}><svg width="21" height="16" viewBox="0 0 21 16" fill="none" stroke="currentColor" strokeWidth="2"><path d="M1 5.5q9.5-8 19 0M4 9q6.5-5.5 13 0M7 12q3.5-3 7 0" /><path d="M8.5 13.5h4l-2 2z" fill="currentColor" stroke="none" /></svg></StatusIcon>
    <StatusIcon $w={30}><svg width="21" height="15" viewBox="0 0 21 15"><path d="M0 5h3l6-4v13l-6-4H0z" fill="currentColor" /><path d="M11.5 5q1.5 2.5 0 5M14.5 3q3 4.5 0 9M17.5 1q4.5 6.5 0 13" fill="none" stroke="currentColor" strokeWidth="1.2" /></svg></StatusIcon>
    <StatusText $size={13} $pad="0 5px 0 6px">71%</StatusText>
    <svg width="23" height="13" viewBox="0 0 23 13"><path d="M7 1H1v11h5M14 1h5v11h-7M21 4.5h1v4h-1" fill="none" stroke="#2d3035" strokeWidth="1.2" /><path d="M12 1L6 7.5h3.5L8 12l6-6.5h-3.5z" fill="#2d3035" /></svg>
    <StatusIcon $w={43}><svg width="15" height="11" viewBox="0 0 15 11"><path d="M0 0h15v11H0z" fill="#fff" /><path d="M0 0h4v11H0zM11 0h4v11h-4zM7.5 2l1 1.5 1.5 0-.5 2-1.5 1.5v1.5h-1V7L5.5 5.5 5 3.5h1.5z" fill="#e01818" /></svg></StatusIcon>
    <StatusText $size={15} $pad="0 16px 0 0">Mon 10:30 AM</StatusText>
    <StatusText $size={14} $bold $pad="0 22px 0 0">humamNR</StatusText>
    <svg width="15" height="15" viewBox="0 0 15 15" fill="none" stroke="#2d3035" strokeWidth="1.4"><circle cx="6" cy="6" r="4.8" /><path d="M9.5 9.5L14 14" strokeWidth="2" /></svg>
    <StatusIcon $w={34} $end><svg width="18" height="12" viewBox="0 0 18 12" stroke="currentColor" strokeWidth="1.6"><path d="M0 1h2M4 1h11M0 6h2M4 6h14M0 11h2M4 11h14" /></svg></StatusIcon>
  </>
);

const options = ['St-Joseph Oratory', 'Community Center', 'Job Opportunity at Tim Hortons', 'Hockey Arena', 'Restaurant Basha'];

export default function App() {
  return (
    <Desktop>
      <Global />
      <MenuBar>
        <FaApple size={16} />
        <Menus>
          {['Chrome', 'File', 'Edit', 'View', 'History', 'Bookmarks', 'People', 'Window', 'Help'].map((m, i) => (
            <MenuItem key={m} $bold={i === 0}>{m}</MenuItem>
          ))}
        </Menus>
        <Status><StatusIcons /></Status>
      </MenuBar>

      <Browser>
        <TabStrip>
          <Lights>
            <Light $c="#ff4542" aria-label="Close" />
            <Light $c="#ffbd06" aria-label="Minimize" />
            <Light $c="#06d445" aria-label="Zoom" />
          </Lights>
          <TabWrap $z={3}><TabShape $active><FluidIcon /><TabTitle>Marihacks :: Fluid UI</TabTitle><CloseX /></TabShape></TabWrap>
          <TabWrap $z={2}><TabShape><TabTitle $bare>New Tab</TabTitle><CloseX /></TabShape></TabWrap>
          <TabWrap $z={1}>
            <TabShape>
              <svg width="14" height="11" viewBox="0 0 14 11"><rect width="14" height="11" rx="2.5" fill="#f90000" /><path d="M5.5 3.2v4.6l4-2.3z" fill="#fff" /></svg>
              <TabTitle $fade>(1) BlocBoy JB &amp; Drake "Look</TabTitle>
              <CloseX />
            </TabShape>
          </TabWrap>
          <NewTab aria-label="New tab" />
          <Profile>
            <svg width="13" height="12" viewBox="0 0 13 12" fill="none" stroke="#e5341c" strokeWidth="1.5"><path d="M4 1Q1 3 1.5 6.5T4 11M2 11h2.5V8.5M9 11q3-2 2.5-5.5T9 1M11 1H8.5v2.5M6.5 3v3.5M6.5 8v1.5" /></svg>
            Humam
          </Profile>
        </TabStrip>
        <Toolbar>
          <NavButton aria-label="Back"><MdArrowBack size={18} /></NavButton>
          <NavButton $dim aria-label="Forward"><MdArrowForward size={18} /></NavButton>
          <NavButton aria-label="Reload"><MdRefresh size={19} /></NavButton>
          <NavButton aria-label="Home"><MdOutlineHome size={19} /></NavButton>
          <Omnibox>
            <MdLock size={13} />
            <Secure>Secure</Secure>
            <Address role="textbox" aria-label="Address" contentEditable suppressContentEditableWarning spellCheck={false}>
              <em>https</em>://<strong>www.fluidui.com</strong>/editor/live/
            </Address>
            <BoxIcon aria-label="Saved passwords"><MdVpnKey size={15} /></BoxIcon>
            <BoxIcon aria-label="Bookmark this page"><MdStarBorder size={18} /></BoxIcon>
          </Omnibox>
          <Extension aria-label="Grammarly"><svg width="16" height="16" viewBox="0 0 16 16"><circle cx="8" cy="8" r="8" fill="#0fc987" /><path d="M11.5 5A4.5 4.5 0 1 0 12.5 9H9" fill="none" stroke="#5f7b70" strokeWidth="1.5" /></svg></Extension>
          <Extension aria-label="Honey"><svg width="16" height="16" viewBox="0 0 16 16"><rect width="16" height="16" rx="3" fill="#c6c6c6" /><path d="M7 2.5L5.5 13.5M4 7q3-1 5-3.5M6.5 8.5q3.5-2.5 3.5 0t0 4q1 1 2-.5" fill="none" stroke="#fff" strokeWidth="1.5" /></svg></Extension>
          <Extension aria-label="Skype"><svg width="16" height="16" viewBox="0 0 16 16"><circle cx="8" cy="8" r="7" fill="#c6c6c6" /><circle cx="4.5" cy="4.5" r="4.5" fill="#c6c6c6" /><circle cx="11.5" cy="11.5" r="4.5" fill="#c6c6c6" /><path d="M10.5 5.2C10 3.5 5.8 3.5 5.8 6s5 1.3 5 3.8-4.8 2.5-5.3.6" fill="none" stroke="#fff" strokeWidth="1.8" /></svg></Extension>
          <Extension aria-label="Privacy monitor"><svg width="20" height="20" viewBox="0 0 20 20"><rect x="2" y="1" width="15" height="14" rx="3" fill="#b5b5b5" stroke="#d0d0d0" /><path d="M4 8q5-6 11 0-6 5-11 0" fill="none" stroke="#555" strokeWidth="1.5" /><circle cx="9" cy="8" r="2" fill="#555" /><path d="M9 9h11v11H9z" fill="#f81309" /><path d="M14.5 11v4.5M14.5 16.5v1.5" stroke="#fff" strokeWidth="1.8" /></svg></Extension>
          <Extension aria-label="Lightning"><svg width="15" height="14" viewBox="0 0 15 14"><path d="M4 3L0 14l6-6 2 3 7-11-6 5-1-3-4 5z" fill="#e8d020" /></svg></Extension>
          <Extension aria-label="Menu"><MdMoreVert size={18} /></Extension>
        </Toolbar>

        <AppHeader>
          <PanelTabs>
            <HeaderTab href="#options" $active>OPTIONS</HeaderTab>
            <HeaderTab href="#chat">CHAT</HeaderTab>
          </PanelTabs>
          <Collapse aria-label="Collapse panel"><svg width="9" height="12" viewBox="0 0 9 12"><path d="M7.5 1L2 6l5.5 5" fill="none" stroke="#888" strokeWidth="2" /></svg></Collapse>
          <Actions>
            <Call><Record />CALL</Call>
            <Avatar>Z</Avatar>
            <Rule />
            <ModeTabs>
              <HeaderTab href="#edit">EDIT</HeaderTab>
              <HeaderTab href="#comment">COMMENT</HeaderTab>
              <HeaderTab href="#preview" $active>PREVIEW</HeaderTab>
            </ModeTabs>
            <HomeLink href="#home" aria-label="Home"><svg width="21" height="19" viewBox="0 0 21 19"><path d="M10.5 0L21 10h-3v8.5h-5v-6H8v6H3V10H0z" fill="#85809a" /></svg></HomeLink>
          </Actions>
        </AppHeader>

        <Workspace>
          <Sidebar>
            <Section $pad="16px 23px 16px">
              <ShareCard>
                <ShareTitle htmlFor="share">SHARE THIS LINK TO INVITE PEOPLE</ShareTitle>
                <ShareRow>
                  <LinkInput id="share" readOnly value="https://www.fluidui.com/ed" />
                  <Copy>COPY</Copy>
                </ShareRow>
              </ShareCard>
              <ToggleRow>Highlight links<Toggle type="checkbox" /></ToggleRow>
              <ToggleRow>Show mobile frame<Toggle type="checkbox" defaultChecked /></ToggleRow>
            </Section>
            <Section $pad="30px 23px 16px">
              <Tool $gap={8}>
                <svg width="12" height="12" viewBox="0 0 12 12" fill="none" stroke="#5fb01c" strokeWidth="1.8"><path d="M2 7V5.5Q2.5 2 6 2t4 3M10 5v1.5Q9.5 10 6 10T2 7" strokeDasharray="9 2" /><path d="M8 5h4l-2 2.5zM0 7h4L2 4.5z" fill="#5fb01c" stroke="none" /></svg>
                Restart preview
              </Tool>
              <ZoomRow>
                <Tool $gap={6}>
                  <svg width="12" height="12" viewBox="0 0 12 12"><path d="M1 5V1h4M7 11h4V7" fill="none" stroke="#c8c8c8" strokeWidth="2" /><path d="M6 0v6h6l-2-2 2-2-2-2-2 2zM0 7h5v5L3.5 10.5 2 12 0 10l1.5-1.5z" fill="#0fa0fa" /></svg>
                  100%
                </Tool>
                <Tool $gap={6}>
                  <svg width="13" height="12" viewBox="0 0 13 12"><path d="M1 5V1h4M8 11h4V7" fill="none" stroke="#c8c8c8" strokeWidth="2" /><path d="M7 0h6v6l-2-2-6 6 2 2H0V6l2 2 7-6z" fill="#0fa0fa" /></svg>
                  Fullscreen
                </Tool>
              </ZoomRow>
              <Slider type="range" min={0} max={100} defaultValue={36} aria-label="Zoom" />
            </Section>
            <Section $pad="37px 0 28px">
              <QrBlock>
                <QrCode />
                <Caption>Get the <a href="#ios">iOS</a> or <a href="#android">Android</a> app</Caption>
              </QrBlock>
            </Section>
          </Sidebar>

          <Stage>
            <Phone>
              <Screen>
                <TitleBar>
                  <Title>Explore</Title>
                  <UserName>Cesar</UserName>
                  <UserIcon><MdPerson size={20} /></UserIcon>
                </TitleBar>
                <CityMap />
                <ListHead>Options near you<Chevron down /></ListHead>
                <List>
                  {options.map((o) => <li key={o}><Option>{o}<Chevron /></Option></li>)}
                </List>
                <BottomNav>
                  <button aria-label="Map"><MdMap size={36} /></button>
                  <button aria-label="Search"><MdSearch size={44} /></button>
                  <button aria-label="Activity"><MdTimeline size={42} /></button>
                  <button aria-label="Settings"><MdSettings size={36} /></button>
                </BottomNav>
              </Screen>
            </Phone>
          </Stage>
        </Workspace>
      </Browser>

      <DockArea>
        <Dock>
          {apps.map((a) => (
            <DockItem key={a.name} $running={a.running} aria-label={a.name}>
              <svg width="40" height="40" viewBox="0 0 40 40" overflow="visible">{a.art}</svg>
            </DockItem>
          ))}
          <DockRule />
          {stacks.map((a) => (
            <DockItem key={a.name} aria-label={a.name}>
              <svg width="40" height="40" viewBox="0 0 40 40">{a.art}</svg>
            </DockItem>
          ))}
        </Dock>
      </DockArea>
    </Desktop>
  );
}
